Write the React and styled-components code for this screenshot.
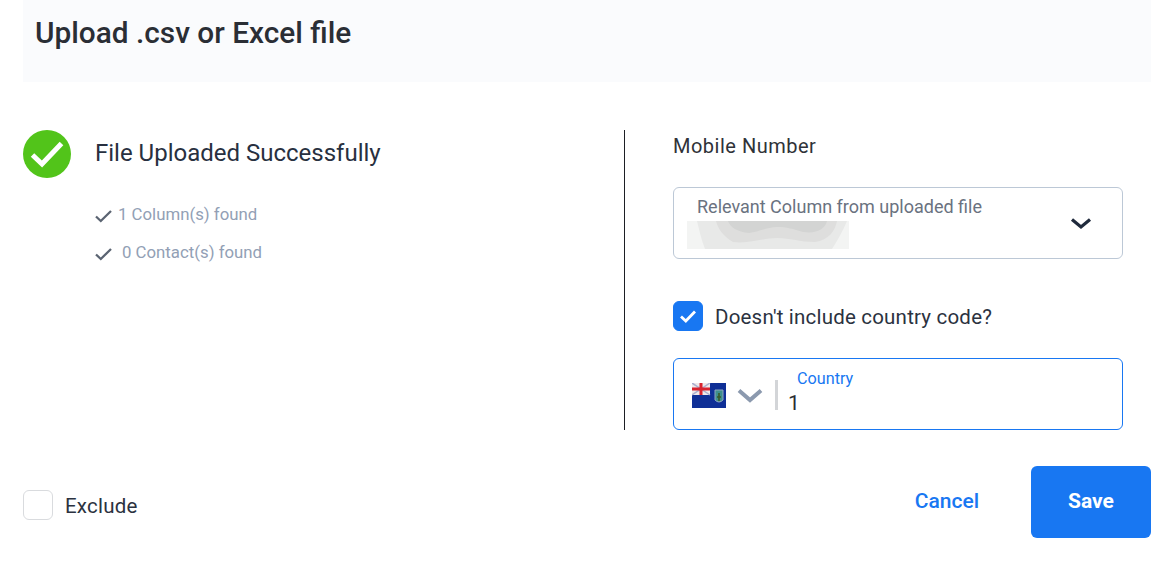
import React from "react";
import styled, { createGlobalStyle } from "styled-components";

const Global = createGlobalStyle`
  html, body { margin: 0; padding: 0; background: #fff; }
  body { font-family: Roboto, "Liberation Sans", sans-serif; color: #242a35; }
`;
const Page = styled.div`
  width: 1154px; height: 564px; box-sizing: border-box; padding: 0 3px 0 23px; overflow: hidden;
  display: flex; flex-direction: column;
`;
const Header = styled.header`
  height: 82px; flex: none; background: #fafbfd; box-sizing: border-box; padding: 14px 0 0 12px;
`;
const Title = styled.h1`
  margin: 0; font-size: 29.8px; line-height: 38px; font-weight: 500; color: #2a2e35; letter-spacing: 0;
`;
const Body = styled.div`
  margin-top: 48px; height: 300px; display: flex; flex: none;
`;
const LeftCol = styled.section`
  box-sizing: border-box; border-right: 1px solid #1d1f24; width: 602px;
`;
const Status = styled.div`
  display: flex; align-items: center; gap: 24px; height: 48px;
`;
const StatusText = styled.div`
  font-size: 24px; line-height: 46px; color: #283040; position: relative; top: -1px;
`;
const FoundList = styled.ul`
  list-style: none; margin: 24px 0 0 72px; padding: 0; display: flex; flex-direction: column; gap: 15px;
`;
const FoundItem = styled.li`
  height: 23px; display: flex; align-items: center; font-size: 16.8px; color: #92a0b5; gap: ${p => p.$gap}px;
`;
const SmallCheck = styled.svg`
  width: 18px; height: 14px; flex: none; position: relative; top: 2px;
`;
const RightCol = styled.section`
  margin-left: 48px; width: 450px; display: flex; flex-direction: column;
`;
const FieldLabel = styled.div`
  font-size: 20px; line-height: 30px; height: 30px; margin-top: 1px; color: #2f3238; letter-spacing: 0.5px;
`;
const SelectBox = styled.div`
  margin-top: 26px; height: 72px; box-sizing: border-box; border: 1px solid #bcc8d6; border-radius: 6px;
  padding: 8px 30px 0 23px; display: flex; justify-content: space-between; position: relative;
`;
const SelectLabel = styled.div`
  font-size: 18px; line-height: 22px; color: #6a7280;
`;
const Redaction = styled.svg`
  position: absolute; left: 13px; top: 33px; width: 162px; height: 28px;
`;
const Chevron = styled.svg`
  width: 22px; height: 13px; margin-top: 21px; flex: none;
`;
const CheckRow = styled.label`
  display: flex; align-items: center; gap: 12px; margin-top: 42px; height: 30px;
`;
const CheckBox = styled.span`
  width: 30px; height: 30px; box-sizing: border-box; flex: none; border-radius: 6px;
  display: flex; align-items: center; justify-content: center;
  background: ${p => (p.$checked ? "#1877f2" : "#fff")};
  border: 1px solid ${p => (p.$checked ? "#1877f2" : "#d9dbde")};
`;
const CheckText = styled.span`
  font-size: 20.5px; color: #2b3240; letter-spacing: 0.2px; position: relative; top: 1px;
`;
const PhoneBox = styled.div`
  margin-top: 27px; height: 72px; box-sizing: border-box; border: 1px solid #1877f2; border-radius: 6px;
  display: flex; align-items: center; padding-left: 18px;
`;
const Flag = styled.svg`
  width: 34px; height: 25px; flex: none; margin-top: 2px;
`;
const FlagChevron = styled.svg`
  width: 26px; height: 15px; margin-left: 11px; flex: none; margin-top: 2px;
`;
const Sep = styled.div`
  width: 3px; height: 30px; background: #d3d5d8; margin-left: 12px; flex: none; margin-top: 1px;
`;
const PhoneField = styled.div`
  margin-left: 10px; display: flex; flex-direction: column; margin-top: -5px;
`;
const CountryLabel = styled.div`
  font-size: 16.2px; line-height: 20px; color: #1877f2; margin-left: 9px;
`;
const PhoneValue = styled.div`
  font-size: 21px; line-height: 24px; color: #2b2e33; margin-top: 2px;
`;
const Footer = styled.footer`
  display: flex; justify-content: space-between; margin-top: 36px; height: 72px;
`;
const ExcludeRow = styled.label`
  display: flex; align-items: center; gap: 12px; height: 30px; margin-top: 24px;
`;
const Actions = styled.div`
  display: flex; align-items: center; gap: 52px;
`;
const CancelButton = styled.button`
  border: 0; background: none; padding: 0 0 2px; font: 500 21px Roboto, sans-serif; color: #1877f2;
`;
const SaveButton = styled.button`
  border: 0; width: 120px; height: 72px; border-radius: 6px; background: #1877f2; color: #fff;
  font: 700 21px Roboto, sans-serif; padding: 0 0 2px;
`;

const Tick = () => (
  <SmallCheck viewBox="0 0 18 14">
    <path d="M1 7.5 L5.8 12 L16 2" fill="none" stroke="#5b6472" strokeWidth="2.3" />
  </SmallCheck>
);

export default function App() {
  return (
    <Page>
      <Global />
      <Header><Title>Upload .csv or Excel file</Title></Header>
      <Body>
        <LeftCol>
          <Status>
            <svg width="48" height="48" viewBox="0 0 48 48">
              <circle cx="24" cy="24" r="24" fill="#52c41a" />
              <path d="M9.5 25 L19 34 L38.5 13.5" fill="none" stroke="#fff" strokeWidth="5" />
            </svg>
            <StatusText>File Uploaded Successfully</StatusText>
          </Status>
          <FoundList>
            <FoundItem $gap={5}><Tick />1 Column(s) found</FoundItem>
            <FoundItem $gap={9}><Tick />0 Contact(s) found</FoundItem>
          </FoundList>
        </LeftCol>
        <RightCol>
          <FieldLabel>Mobile Number</FieldLabel>
          <SelectBox>
            <SelectLabel>Relevant Column from uploaded file</SelectLabel>
            <Redaction viewBox="0 0 162 28">
              <rect width="162" height="28" fill="#f3f4f3" />
              <path d="M10 0 H160 C156 10 150 20 145 28 H18 C14 18 12 8 10 0Z" fill="#e8e9e8" />
              <path d="M29 0 H150 C148 10 142 19 128 21 C112 21 104 17 90 17 C76 17 62 23 46 21 C36 15 31 8 29 0Z" fill="#dededd" />
              <path d="M41 0 H140 C138 8 130 13 116 11 C106 8 100 6 90 6 C80 6 72 11 62 12 C50 11 43 6 41 0Z" fill="#d3d4d3" />
            </Redaction>
            <Chevron viewBox="0 0 22 13">
              <path d="M2 2.5 L11 10 L20 2.5" fill="none" stroke="#1f2a3c" strokeWidth="3.2" />
            </Chevron>
          </SelectBox>
          <CheckRow>
            <CheckBox $checked>
              <svg width="18" height="14" viewBox="0 0 18 14">
                <path d="M2 7.5 L6.8 12 L16 2.5" fill="none" stroke="#fff" strokeWidth="2.8" />
              </svg>
            </CheckBox>
            <CheckText>Doesn't include country code?</CheckText>
          </CheckRow>
          <PhoneBox>
            <Flag viewBox="0 0 34 25">
              <rect width="34" height="25" fill="#0f2f96" />
              <rect width="18" height="12" fill="#efe9ea" />
              <path d="M0 0 L18 12 M18 0 L0 12" stroke="#a9aecf" strokeWidth="1.5" />
              <path d="M9 0 V12 M0 6 H18" stroke="#d8232f" strokeWidth="3" />
              <path d="M23 7 H31 V17 Q27 21 23 17Z" fill="#3f8f8c" stroke="#8fa6c0" strokeWidth="1" />
              <path d="M27 10 V18 M25 14 H29" stroke="#3a5a28" strokeWidth="1.6" />
            </Flag>
            <FlagChevron viewBox="0 0 26 15">
              <path d="M2 2.5 L13 12 L24 2.5" fill="none" stroke="#8b99ae" strokeWidth="4" />
            </FlagChevron>
            <Sep />
            <PhoneField>
              <CountryLabel>Country</CountryLabel>
              <PhoneValue>1</PhoneValue>
            </PhoneField>
          </PhoneBox>
        </RightCol>
      </Body>
      <Footer>
        <ExcludeRow>
          <CheckBox />
          <CheckText>Exclude</CheckText>
        </ExcludeRow>
        <Actions>
          <CancelButton>Cancel</CancelButton>
          <SaveButton>Save</SaveButton>
        </Actions>
      </Footer>
    </Page>
  );
}
